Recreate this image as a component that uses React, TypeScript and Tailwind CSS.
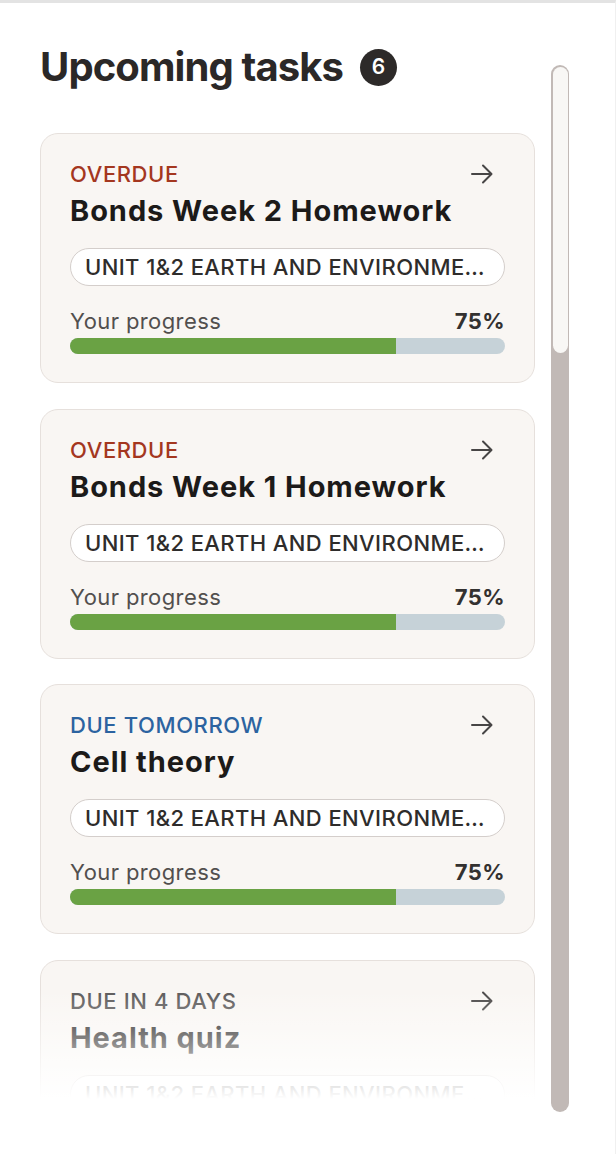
import React from "react";

type Task = {
  status: string;
  statusColor: string;
  title: string;
  unit: string;
  progress: number;
};

const tasks: Task[] = [
  { status: "OVERDUE", statusColor: "text-[#a4371f]", title: "Bonds Week 2 Homework", unit: "UNIT 1&2 EARTH AND ENVIRONMENTAL SCIENCE", progress: 75 },
  { status: "OVERDUE", statusColor: "text-[#a4371f]", title: "Bonds Week 1 Homework", unit: "UNIT 1&2 EARTH AND ENVIRONMENTAL SCIENCE", progress: 75 },
  { status: "DUE TOMORROW", statusColor: "text-[#2c63a0]", title: "Cell theory", unit: "UNIT 1&2 EARTH AND ENVIRONMENTAL SCIENCE", progress: 75 },
  { status: "DUE IN 4 DAYS", statusColor: "text-[#5a5858]", title: "Health quiz", unit: "UNIT 1&2 EARTH AND ENVIRONMENTAL SCIENCE", progress: 75 },
];

function Arrow() {
  return (
    <svg width="22" height="22" viewBox="0 0 22 22" fill="none" className="mr-[12px] shrink-0">
      <path d="M1 11h19" stroke="#474545" strokeWidth="2" strokeLinecap="round" />
      <path d="M12 2.5l8.5 8.5-8.5 8.5" stroke="#474545" strokeWidth="2" strokeLinecap="round" strokeLinejoin="round" />
    </svg>
  );
}

function TaskCard({ t }: { t: Task }) {
  return (
    <div className="w-[495px] shrink-0 rounded-[18px] border border-[#e6e0dc] bg-[#f9f6f3] px-[29px] pt-[26px] pb-[28px]">
      <div className="flex items-center justify-between">
        <span className={`text-[22px] leading-[28px] font-medium tracking-[0.6px] ${t.statusColor}`}>{t.status}</span>
        <Arrow />
      </div>
      <div className="mt-[6px] text-[29px] leading-[34px] font-bold text-[#1c1a19] tracking-[0.95px]">{t.title}</div>
      <div className="mt-[20px] h-[38px] rounded-full border-[1.5px] border-[#d4cecb] bg-white px-[14px] flex items-center">
        <span className="block w-full truncate text-[22px] leading-[34px] font-medium text-[#2e2c2b] tracking-[0.4px]">{t.unit}</span>
      </div>
      <div className="mt-[21px] flex items-center justify-between">
        <span className="text-[22px] leading-[28px] text-[#524f4e] tracking-[0.4px]">Your progress</span>
        <span className="text-[22px] leading-[28px] font-bold text-[#333130] tracking-[0.4px]">{t.progress}%</span>
      </div>
      <div className="mt-[3px] h-[16px] w-full rounded-full bg-[#c6d2d8] overflow-hidden">
        <div className="h-full bg-[#6aa244]" style={{ width: `${t.progress}%` }} />
      </div>
    </div>
  );
}

export default function App() {
  return (
    <div
      className="w-[616px] h-[1154px] bg-white border-t-[3px] border-t-[#e3e3e3] border-r border-r-[#f0f0f0] flex overflow-hidden"
      style={{ fontFamily: "Inter, 'Noto Sans', sans-serif" }}
    >
      <div className="w-[535px] shrink-0 pl-[40px] pt-[40px] flex flex-col">
        <div className="flex items-center h-[48px]">
          <h1 className="text-[40px] leading-[48px] font-bold text-[#2b2827] tracking-[-0.9px]">Upcoming tasks</h1>
          <span className="ml-[17px] w-[37px] h-[37px] rounded-full bg-[#2d2a29] text-white text-[21px] font-semibold flex items-center justify-center">
            6
          </span>
        </div>
        <div className="relative mt-[42px] h-[978px] overflow-hidden">
          <div className="flex flex-col gap-[25.5px]">
            {tasks.map((t, i) => (
              <TaskCard key={i} t={t} />
            ))}
          </div>
          <div className="absolute left-0 right-0 bottom-0 h-[122px] bg-[linear-gradient(to_bottom,rgba(255,255,255,0)_0px,#ffffff_110px)]" />
        </div>
      </div>
      <div className="ml-[16px] mt-[62px] w-[18px] h-[1047px] rounded-full bg-[#c1b9b6] p-[1.5px] shrink-0">
        <div className="h-[286px] w-full rounded-full bg-[#f8f7f5]" />
      </div>
    </div>
  );
}
